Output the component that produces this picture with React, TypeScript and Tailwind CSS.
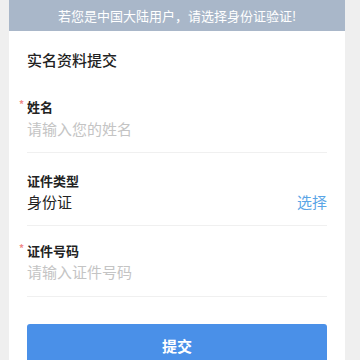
const font = "font-['Noto_Sans_CJK_SC','Noto_Sans',sans-serif]";

function Label({ text, required }: { text: string; required?: boolean }) {
  return (
    <div className="relative text-[13px] leading-[18px] font-semibold text-[#222]">
      {required && (
        <span className="absolute left-[-8px] top-[-3px] text-[10px] text-[#f08a8a]">*</span>
      )}
      {text}
    </div>
  );
}

export default function App() {
  return (
    <div className={`flex h-[360px] w-[360px] overflow-hidden bg-[#efefef] ${font}`}>
      <div className="ml-[9px] w-[336px] shrink-0 bg-white">
        <div className="flex h-[31px] items-center justify-center bg-[#a9b7c9] text-[13px] text-white">
          若您是中国大陆用户，请选择身份证验证!
        </div>
        <div className="px-[18px]">
          <h1 className="mt-[19px] text-[15px] leading-[20px] font-medium text-[#222]">实名资料提交</h1>

          <div className="mt-[28px] border-b border-[#f0f0f0] pb-[12px]">
            <Label text="姓名" required />
            <input
              placeholder="请输入您的姓名"
              className="mt-[2px] block w-full text-[15px] leading-[22px] text-[#333] outline-none placeholder:text-[#c4c4c4]"
            />
          </div>

          <div className="border-b border-[#f0f0f0] pt-[19px] pb-[12px]">
            <Label text="证件类型" />
            <div className="mt-[1px] flex items-center justify-between text-[15px] leading-[22px]">
              <span className="text-[#222]">身份证</span>
              <span className="text-[#5aa5e6]">选择</span>
            </div>
          </div>

          <div className="border-b border-[#f0f0f0] pt-[16px] pb-[13px]">
            <Label text="证件号码" required />
            <input
              placeholder="请输入证件号码"
              className="mt-[1px] block w-full text-[15px] leading-[22px] text-[#333] outline-none placeholder:text-[#c4c4c4]"
            />
          </div>

          <button className="mt-[27px] flex h-[44px] w-full items-center justify-center rounded-[3px] bg-[#4a90e8] text-[15px] font-bold text-white">
            提交
          </button>
        </div>
      </div>
    </div>
  );
}
